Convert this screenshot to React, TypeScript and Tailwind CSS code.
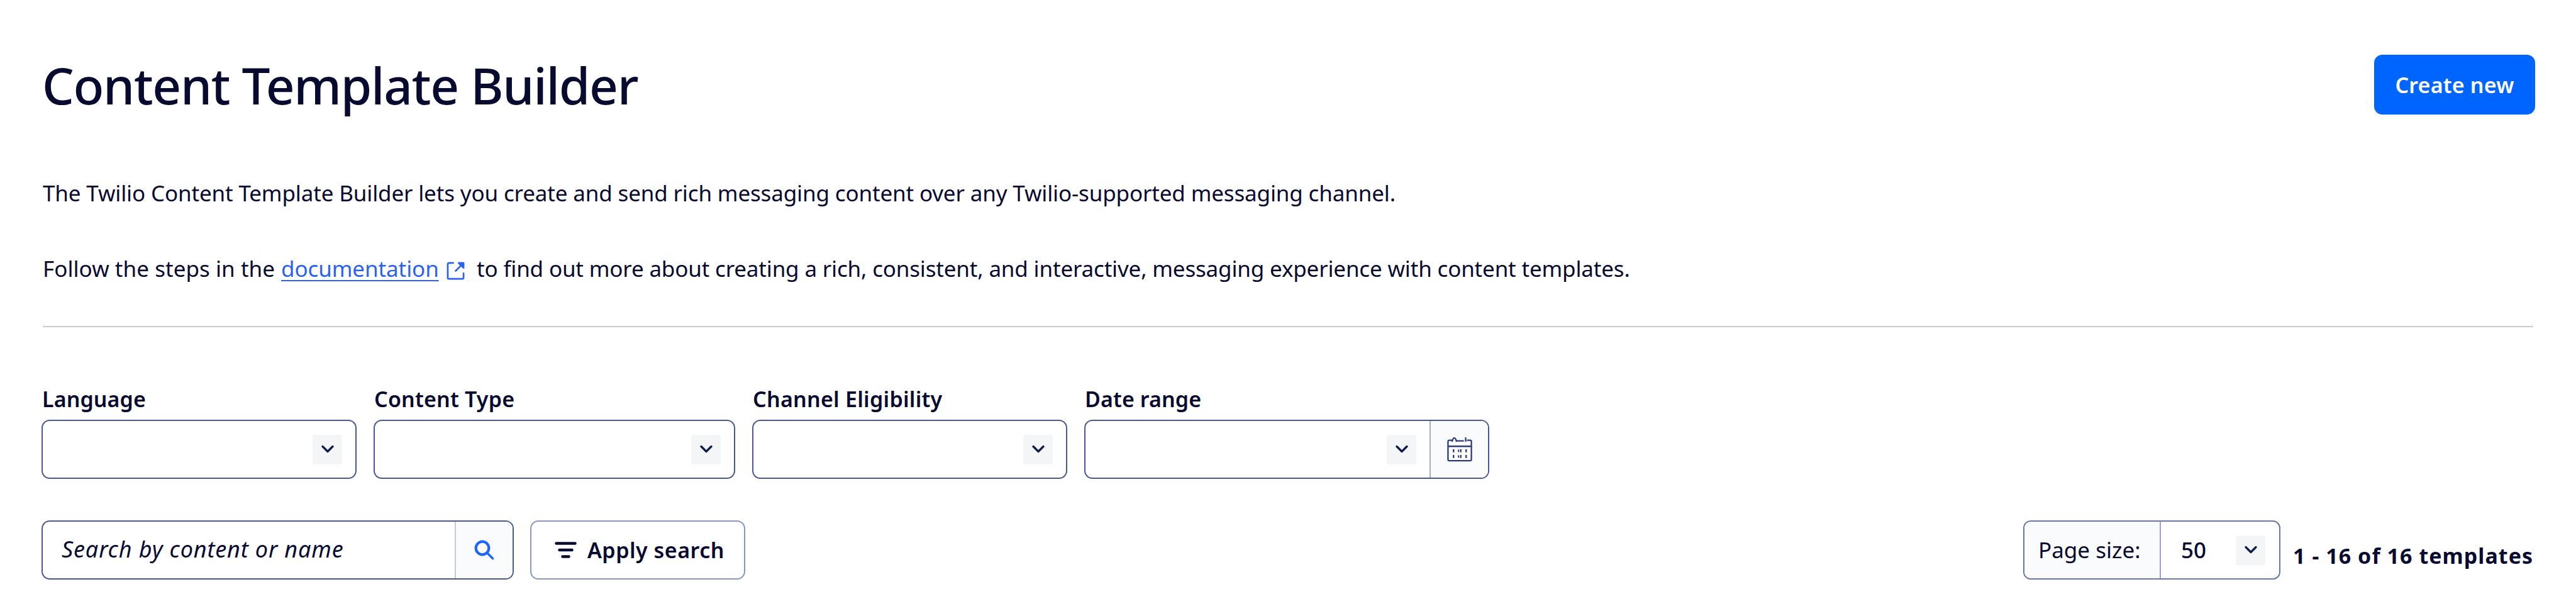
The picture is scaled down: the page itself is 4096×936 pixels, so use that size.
import type { ReactNode } from "react";

function Chevron() {
  return (
    <span className="flex h-[47px] w-[47px] shrink-0 items-center justify-center rounded-[3px] bg-[#f4f5f7]">
      <svg className="h-[14px] w-[22px]" viewBox="0 0 22 14" fill="none" stroke="#121c4d" strokeWidth="3.4" strokeLinecap="round" strokeLinejoin="round">
        <path d="M3 2.500 L11 10.500 L19 2.500" />
      </svg>
    </span>
  );
}

function CalendarIcon() {
  return (
    <svg className="h-[40px] w-[40px]" viewBox="0 0 42 42" fill="none" stroke="#2c3a7d" strokeWidth="2.4" strokeLinecap="round" strokeLinejoin="round">
      <rect x="1.500" y="6" width="39" height="34" rx="2" fill="#ffffff" stroke="none" />
      <path d="M8 6 H3.500 Q1.500 6 1.500 8 V38 Q1.500 40 3.500 40 H38.500 Q40.500 40 40.500 38 V8 Q40.500 6 38.500 6 H34 M16 7 H27 M1.500 16 H40.500" />
      <path d="M8.500 7.500 Q10 2 12 2 Q14 2 15.500 7.500 M31 2 V7.500" />
      <g fill="#2c3a7d" stroke="none">
        <rect x="9.500" y="21" width="2.500" height="5" />
        <rect x="18" y="21.500" width="2" height="4" />
        <rect x="21.500" y="21" width="2.500" height="5" />
        <rect x="30.500" y="21" width="2.500" height="5" />
        <rect x="9.500" y="30.500" width="2.500" height="5" />
        <rect x="18" y="31" width="2" height="4" />
        <rect x="21.500" y="30.500" width="2.500" height="5" />
        <rect x="30.500" y="30.500" width="2.500" height="5" />
      </g>
    </svg>
  );
}

function Field({ label, width, tracking, children }: { label: string; width: string; tracking: string; children?: ReactNode }) {
  return (
    <div className={width}>
      <div className={`pl-px text-[34px] leading-[40px] font-semibold whitespace-nowrap ${tracking}`}>{label}</div>
      <div className="mt-[13px] flex h-[94px] overflow-hidden rounded-[13px] border-2 border-[#4a5993] bg-white">
        <div className="flex flex-1 items-center justify-end pr-[21px]">
          <Chevron />
        </div>
        {children}
      </div>
    </div>
  );
}

export default function App() {
  return (
    <main className="h-[936px] w-[4096px] overflow-hidden bg-white pt-[87px] pr-[65px] pl-[66px] font-['Noto_Sans',sans-serif] text-[#090a30]">
      <header className="flex items-start justify-between">
        <h1 className="pl-px text-[80px] leading-[96px] font-medium tracking-[-1.3px] whitespace-nowrap">Content Template Builder</h1>
        <button className="h-[95px] w-[256px] rounded-[13px] bg-[#0065ff] text-[34px] leading-[40px] font-semibold tracking-[0.2px] text-white">Create new</button>
      </header>

      <div className="mt-[99px] pl-[2px] text-[35px] leading-[50px] whitespace-nowrap">
        <p className="tracking-[-0.15px]">
          The Twilio Content Template Builder lets you create and send rich messaging content over any Twilio-supported messaging channel.
        </p>
        <p className="mt-[70px] flex items-center">
          <span className="w-[379px] tracking-[0.05px] whitespace-pre">Follow the steps in the </span>
          <a className="w-[251px] tracking-[-0.1px] text-[#2b62f5] underline decoration-2 underline-offset-[5px]">documentation</a>
          <svg className="mt-[6px] mr-[19px] ml-[12px] h-[29px] w-[29px]" viewBox="0 0 30 30" fill="none" stroke="#2b62f5" strokeWidth="2.8" strokeLinecap="round" strokeLinejoin="round">
            <path d="M11 2 H4 Q2 2 2 4 V26 Q2 28 4 28 H26 Q28 28 28 26 V19" />
            <path d="M20 2 H28 V10 Z" fill="#2b62f5" />
            <path d="M26 4 L15 15" />
          </svg>
          <span className="tracking-[-0.17px]">to find out more about creating a rich, consistent, and interactive, messaging experience with content templates.</span>
        </p>
      </div>

      <hr className="mt-[66px] mr-[3px] ml-[2px] h-[2px] border-0 bg-[#c9c9d8]" />

      <section className="mt-[94px] flex gap-[27px]">
        <Field label="Language" width="w-[501px]" tracking="tracking-[0.1px]" />
        <Field label="Content Type" width="w-[575px]" tracking="tracking-[0.2px]" />
        <Field label="Channel Eligibility" width="w-[501px]" tracking="tracking-[0.25px]" />
        <Field label="Date range" width="w-[644px]" tracking="tracking-[0.1px]">
          <div className="flex w-[93px] items-center justify-center border-l-2 border-[#a3acca] bg-[#fafbfc]">
            <CalendarIcon />
          </div>
        </Field>
      </section>

      <section className="mt-[66px] flex items-start">
        <div className="flex h-[94px] w-[751px] overflow-hidden rounded-[13px] border-2 border-[#4a5993]">
          <div className="flex flex-1 items-center pb-[2px] pl-[30px] text-[36px] leading-[40px] font-normal tracking-[0.85px] whitespace-nowrap italic">Search by content or name</div>
          <div className="flex w-[92px] items-center justify-center border-l-2 border-[#c3c8da] bg-[#fafbfc]">
            <svg className="h-[32px] w-[32px]" viewBox="0 0 32 32" fill="none" stroke="#1c66ff" strokeLinecap="round">
              <circle cx="13" cy="13" r="10.300" fill="#ffffff" strokeWidth="4.200" />
              <path d="M21 21 L29.500 29.500" strokeWidth="3.600" />
            </svg>
          </div>
        </div>
        <button className="ml-[26px] flex h-[94px] w-[342px] items-center rounded-[13px] border-2 border-[#8897c6] pl-[37px] text-[34px] leading-[40px] font-semibold">
          <svg className="mr-[17px] h-[26px] w-[35px]" viewBox="0 0 35 26" fill="none" stroke="#090a30" strokeWidth="4.500" strokeLinecap="round">
            <path d="M2.500 2.500 H32.500 M7.500 13 H27.500 M12.500 23.500 H22.500" />
          </svg>
          <span className="tracking-[0.5px] whitespace-nowrap">Apply search</span>
        </button>

        <div className="ml-auto flex h-[94px] w-[409px] overflow-hidden rounded-[12px] border-2 border-[#6878ae]">
          <div className="flex w-[217px] items-center border-r-2 border-[#9aa4c6] bg-[#fafbfc] pl-[22px] text-[35px] leading-[40px] font-normal whitespace-nowrap">Page size:</div>
          <div className="flex flex-1 items-center justify-between pr-[22px] pl-[32px] text-[35px] leading-[40px] font-medium">
            50
            <Chevron />
          </div>
        </div>
        <div className="mt-[36px] ml-[20px] w-[385px] text-[34px] leading-[40px] font-bold tracking-[1.05px] whitespace-nowrap">1 - 16 of 16 templates</div>
      </section>
    </main>
  );
}
